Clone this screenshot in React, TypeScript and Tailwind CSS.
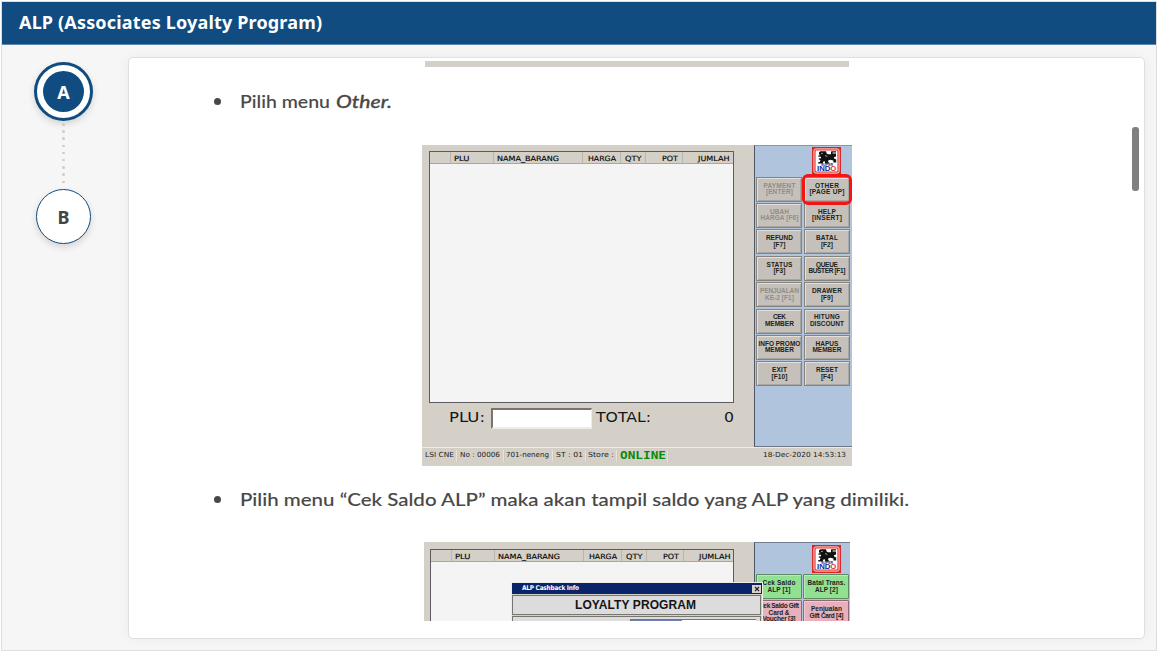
import { useLayoutEffect, useRef } from "react";
import clsx from "clsx";

type FitProps = { w: number; stretch?: boolean; className?: string; children: React.ReactNode };

/* Text set to a given width, either by its letter spacing or by widening the letters. */
function Fit({ w, stretch, className, children }: FitProps) {
  const ref = useRef<HTMLSpanElement>(null);
  useLayoutEffect(() => {
    const el = ref.current;
    if (!el) return;
    el.style.cssText = "";
    const natural = el.getBoundingClientRect().width;
    if (stretch) {
      el.style.transform = `scaleX(${w / natural})`;
      el.style.marginRight = `${w - natural}px`;
      return;
    }
    const n = (el.textContent || "").length;
    const gap = (w - natural) / Math.max(1, n - 1);
    el.style.letterSpacing = `${gap}px`;
    el.style.marginRight = `${-gap}px`;
  }, [w, stretch]);
  return (
    <span ref={ref} className={clsx("inline-block shrink-0 origin-left whitespace-pre", className)}>
      {children}
    </span>
  );
}

function Logo() {
  return (
    <svg viewBox="0 0 29 28" className="h-[28px] w-[29px] shrink-0">
      <rect width="29" height="28" fill="#dc2626" />
      <rect x="1.9" y="1.9" width="25.2" height="24.2" rx="2" fill="#e23a36" stroke="#fff" strokeWidth="0.8" />
      <rect x="3.6" y="3.6" width="21.8" height="20.8" rx="1.2" fill="#fff" />
      <path
        d="M8.5 4.2h5.6l.5 2.4 1.4.6h3V4.6l1-.4h4v1.2h-3.4v1h3.4v3.2l-2.2.6.4 1.4 2 .8v3h-2.8v-1.8l-3.2-.8-2 .8v1.6l1 .2v1.2h-4.2v-2.4l-2 .6v1.8H6.2v-1.4l1.8-.4.4-1.8-1.6-.4v-1l2.2-.4v-1.4H6.4v-1.2l2.4-.6V8L7 7.4V5.2z"
        fill="#111"
      />
      <path d="M13 8.6l2.4.8M9 6.4h1.8" stroke="#fff" strokeWidth="0.6" />
      <text x="9" y="19" fontFamily="Liberation Sans, sans-serif" fontWeight="700" fontSize="3" textLength="12" lengthAdjust="spacingAndGlyphs" fill="#26268c">
        SUPER
      </text>
      <text x="5" y="24.2" fontFamily="Liberation Sans, sans-serif" fontWeight="700" fontSize="7" textLength="19.4" lengthAdjust="spacingAndGlyphs" fill="#26268c">
        IND<tspan fill="#e2302e">O</tspan>
      </text>
    </svg>
  );
}

const columns = [
  { label: "", w: 0, cls: "w-[21px]" },
  { label: "PLU", w: 15.5, cls: "w-[43px] pl-[3px]" },
  { label: "NAMA_BARANG", w: 62, cls: "w-[89px] pl-[3px]" },
  { label: "HARGA", w: 28, cls: "w-[38px] justify-end pr-[4px]" },
  { label: "QTY", w: 16.5, cls: "w-[25px] pl-[4px]" },
  { label: "POT", w: 16, cls: "w-[37px] justify-end pr-[4px]" },
  { label: "JUMLAH", w: 31.5, cls: "w-[50px] justify-end pr-[4px]" },
];

function TableHead() {
  return (
    <div className="flex h-[12px] border-b border-[#aaa7a0] bg-[#d4d0c8] font-['DejaVu_Sans',sans-serif] text-[7.2px] leading-[13px] text-black">
      {columns.map((c, i) => (
        <div key={i} className={clsx("flex h-full shrink-0", i < 6 && "border-r border-[#b9b6af]", c.cls)}>
          {c.label && <Fit w={c.w} stretch className="[-webkit-text-stroke:0.15px_#111]">{c.label}</Fit>}
        </div>
      ))}
    </div>
  );
}

type Line = [string, number];
type Key = { lines: Line[]; off?: boolean; mark?: boolean };

const keys: Key[] = [
  { lines: [["PAYMENT", 32], ["[ENTER]", 27]], off: true },
  { lines: [["OTHER", 24], ["[PAGE UP]", 35]], mark: true },
  { lines: [["UBAH", 19], ["HARGA [F6]", 38]], off: true },
  { lines: [["HELP", 18], ["[INSERT]", 30]] },
  { lines: [["REFUND", 27], ["[F7]", 12]] },
  { lines: [["BATAL", 22], ["[F2]", 12]] },
  { lines: [["STATUS", 26], ["[F3]", 12]] },
  { lines: [["QUEUE", 22], ["BUSTER [F1]", 37]] },
  { lines: [["PENJUALAN", 39], ["KE-2 [F1]", 29]], off: true },
  { lines: [["DRAWER", 30], ["[F9]", 12]] },
  { lines: [["CEK", 13], ["MEMBER", 29]] },
  { lines: [["HITUNG", 26], ["DISCOUNT", 34]] },
  { lines: [["INFO PROMO", 42], ["MEMBER", 29]] },
  { lines: [["HAPUS", 23], ["MEMBER", 29]] },
  { lines: [["EXIT", 15], ["[F10]", 16]] },
  { lines: [["RESET", 22], ["[F4]", 12]] },
];

function PosKey({ lines, off, mark }: Key) {
  return (
    <div
      className={clsx(
        "relative flex h-[25px] flex-col items-center justify-center border border-[#85837f] bg-[#c5c1ba] text-[6.5px] font-bold leading-[6.6px] shadow-[inset_1px_1px_0_#e3e0db,inset_-1px_-1px_0_#a9a6a0]",
        off ? "text-[#8f8d88]" : "text-[#222120]"
      )}
    >
      {lines.map(([t, w]) => (
        <Fit key={t} w={w}>{t}</Fit>
      ))}
      {mark && <div className="absolute -inset-x-[3px] -inset-y-[4px] z-10 rounded-[6px] border-[3px] border-[#f51414]" />}
    </div>
  );
}

function Divider() {
  return <div className="h-[12px] w-[2px] shrink-0 border-l border-[#e6e3dd] bg-[#cdc9c1]" />;
}

function PosScreen() {
  return (
    <div className="ml-[293px] flex h-[321px] w-[430px] flex-col bg-[#d4d0c8] font-['Liberation_Sans',sans-serif]">
      <div className="flex h-[302px]">
        <div className="w-[332px] shrink-0 pl-[7px] pt-[6px]">
          <div className="h-[252px] w-[305px] border border-[#5c5c60] bg-[#f4f4f4]">
            <TableHead />
          </div>
          <div className="flex h-[30px] items-center pl-[20px] font-['DejaVu_Sans',sans-serif] text-[14.5px] leading-none text-[#161616]">
            <Fit w={36} stretch className="-mt-[1px]">PLU:</Fit>
            <div className="ml-[6px] mt-[1px] h-[21px] w-[101px] shrink-0 border-b-2 border-l-2 border-r border-t-2 border-b-[#eeece8] border-l-[#77756f] border-r-[#eeece8] border-t-[#77756f] bg-white" />
            <Fit w={55} stretch className="-mt-[1px] ml-[4px]">TOTAL:</Fit>
            <Fit w={10} stretch className="-mt-[1px] ml-[73px]">0</Fit>
          </div>
        </div>
        <div className="flex w-[98px] shrink-0 flex-col border-b border-l border-t border-b-[#6f7784] border-l-[#4d5768] border-t-[#8898b0] bg-[#b0c4de]">
          <div className="flex h-[30.6px] pl-[57.4px] pt-[1px]">
            <Logo />
          </div>
          <div className="grid grid-cols-[46px_46px] gap-x-[1.5px] gap-y-[1.4px] pl-[1.4px]">
            {keys.map((k, i) => (
              <PosKey key={i} {...k} />
            ))}
          </div>
        </div>
      </div>
      <div className="flex h-[19px] items-center border-t border-[#eeece7] pl-[3px] pr-[6px] font-['DejaVu_Sans',sans-serif] text-[7px] leading-none text-[#222] [&>div]:mt-[-3px] [&>span]:mt-[-4px]">
        <Fit w={29} stretch>LSI CNE</Fit>
        <div className="w-[2px]" />
        <Divider />
        <Fit w={40} stretch className="ml-[1.5px]">No : 00006</Fit>
        <div className="w-[3px]" />
        <Divider />
        <Fit w={43} stretch className="ml-[1.5px]">701-neneng</Fit>
        <div className="w-[3px]" />
        <Divider />
        <Fit w={27} stretch className="ml-[1.5px]">ST : 01</Fit>
        <div className="w-[2px]" />
        <Divider />
        <Fit w={26} stretch className="ml-[1.5px]">Store :</Fit>
        <div className="w-[2px]" />
        <Divider />
        <Fit w={46} stretch className="ml-[1.5px] pt-[1px] font-['DejaVu_Sans_Mono',monospace] text-[11px] font-bold text-[#078a07]">ONLINE</Fit>
        <div className="w-[1px]" />
        <Divider />
        <Fit w={83} stretch className="ml-auto">18-Dec-2020 14:53:13</Fit>
      </div>
    </div>
  );
}

const giftKeys: { lines: Line[]; green?: boolean }[] = [
  { lines: [["Cek Saldo", 33], ["ALP [1]", 23]], green: true },
  { lines: [["Batal Trans.", 38], ["ALP [2]", 23]], green: true },
  { lines: [["Cek Saldo Gift", 40], ["Card &", 21], ["Voucher [3]", 33]] },
  { lines: [["Penjualan", 31], ["Gift Card [4]", 34]] },
];

function LoyaltyScreen() {
  return (
    <div className="relative ml-[295px] flex h-[79px] w-[426px] overflow-hidden bg-[#d4d0c8] font-['Liberation_Sans',sans-serif]">
      <div className="w-[330px] shrink-0 pl-[6px] pt-[7px]">
        <div className="h-[90px] w-[304px] border border-[#5c5c60] bg-[#f4f4f4]">
          <TableHead />
        </div>
      </div>
      <div className="w-[96px] shrink-0 border-l border-t border-l-[#4d5768] border-t-[#6f7c90] bg-[#b0c4de]">
        <div className="flex h-[31px] pl-[57.4px] pt-[1.5px]">
          <Logo />
        </div>
        <div className="grid grid-cols-[46px_46px] gap-[1.4px] pl-[1px]">
          {giftKeys.map((k, i) => (
            <div
              key={i}
              className={clsx(
                "flex h-[25px] flex-col items-center justify-center rounded-[1px] border text-[6.5px] font-bold leading-[6.6px] text-[#222] shadow-[inset_1px_1px_0_rgba(255,255,255,0.35)]",
                k.green ? "border-[#5c8a63] bg-[#92e092]" : "border-[#8c6a76] bg-[#e8b0bb]"
              )}
            >
              {k.lines.map(([t, w]) => (
                <Fit key={t} w={w}>{t}</Fit>
              ))}
            </div>
          ))}
        </div>
      </div>
      {/* Dialog over the till screen */}
      <div className="absolute left-[87px] top-[40px] h-[60px] w-[252px] border border-[#efede8] bg-[#d4d0c8]">
        <div className="flex h-[11px] items-center justify-between bg-[#0a246a] pl-[10px] pr-[1px] text-white">
          <Fit w={57} className="font-['DejaVu_Sans_Condensed','DejaVu_Sans',sans-serif] text-[6.5px] font-bold leading-[11px]">ALP Cashback Info</Fit>
          <div className="flex h-[8px] w-[9px] items-center justify-center bg-[#d8d4cc]">
            <svg viewBox="0 0 6 6" className="h-[6px] w-[6px]">
              <path d="M1 1l4 4M5 1L1 5" stroke="#222" strokeWidth="1.1" />
            </svg>
          </div>
        </div>
        <div className="mr-[1px] mt-[1px] flex h-[20px] items-center justify-center border border-[#77756f] bg-[#dcdcdc] pr-[2px] text-[12px] font-bold text-[#141414]">
          <Fit w={121}>LOYALTY PROGRAM</Fit>
        </div>
        <div className="mr-[1px] mt-[1px] h-[30px] border border-[#77756f] bg-[#dcdcdc] pl-[117px] pt-[2px]">
          <div className="flex h-[20px] w-[126px] border-l border-t border-[#77756f] bg-white">
            <div className="w-[51px] bg-[#7582b8]" />
          </div>
        </div>
      </div>
    </div>
  );
}

function Bullet({ children }: { children: React.ReactNode }) {
  return (
    <div className="flex h-[30px] items-center pl-[85px] font-[Lato,sans-serif] text-[18px] font-medium text-[#484848] [-webkit-text-stroke:0.1px_#484848]">
      <span className="-mt-[1px] h-[7px] w-[7px] shrink-0 rounded-full bg-[#484848]" />
      <span className="ml-[18.5px] flex whitespace-nowrap pb-[2px]">{children}</span>
    </div>
  );
}

export default function App() {
  return (
    <div className="h-[652px] w-[1158px] overflow-hidden bg-white p-px font-['Noto_Sans',sans-serif]">
      <div className="flex h-[650px] w-[1156px] flex-col border border-[#dedede] bg-[#f6f6f6]">
        <header className="flex h-[43px] shrink-0 items-center border-b border-[#5d88ae] bg-[#104c80] pb-[2px] pl-[17px] text-[18px] font-bold leading-none text-white">
          <Fit w={303}>ALP (Associates Loyalty Program)</Fit>
        </header>
        <div className="flex flex-1">
          <nav className="flex w-[126px] shrink-0 flex-col items-center pr-[3px] pt-[17px] text-[18px] font-bold leading-none">
            <div className="flex h-[59px] w-[59px] shrink-0 items-center justify-center rounded-full border-[3px] border-[#104c80] bg-white shadow-[0_3px_7px_rgba(0,0,0,0.14)]">
              <div className="flex h-[41px] w-[41px] items-center justify-center rounded-full bg-[#104c80] pt-[1px] text-white">A</div>
            </div>
            <div className="flex h-[68px] shrink-0 flex-col items-center gap-[4.7px] pt-[2px]">
              {Array.from({ length: 9 }, (_, i) => (
                <span key={i} className="h-[2.5px] w-[2.5px] shrink-0 rounded-full bg-[#cccccc]" />
              ))}
            </div>
            <div className="flex h-[55px] w-[55px] shrink-0 items-center justify-center rounded-full border border-[#104c80] bg-white pt-[1px] text-[#444] shadow-[0_3px_7px_rgba(0,0,0,0.14)]">
              B
            </div>
          </nav>
          <main className="mt-[12px] flex h-[582px] w-[1017px] shrink-0 rounded-[5px] border border-[#dfdfdf] bg-white pt-[3px] shadow-[0_0_12px_rgba(0,0,0,0.05)]">
            <div className="h-[561px] w-[1003px] overflow-hidden">
              <div className="ml-[296px] h-[6px] w-[424px] bg-[#d4d0c8]" />
              <div className="pt-[20px]">
                <Bullet>
                  <Fit w={90} stretch>Pilih menu</Fit>
                  <Fit w={56} stretch className="ml-[6px] italic [-webkit-text-stroke:0.3px_#484848]">Other.</Fit>
                </Bullet>
              </div>
              <div className="pt-[28px]">
                <PosScreen />
              </div>
              <div className="pt-[19px]">
                <Bullet>
                  <Fit w={669} stretch>Pilih menu “Cek Saldo ALP” maka akan tampil saldo yang ALP yang dimiliki.</Fit>
                </Bullet>
              </div>
              <div className="pt-[27px]">
                <LoyaltyScreen />
              </div>
            </div>
            <div className="mt-[66px] h-[64px] w-[7px] rounded-[3px] bg-[#808080]" />
          </main>
        </div>
      </div>
    </div>
  );
}
